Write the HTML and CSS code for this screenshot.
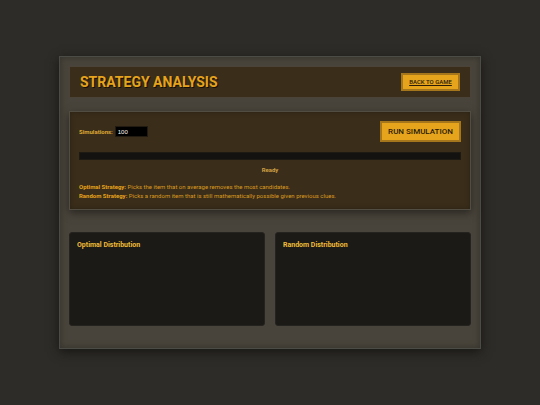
FILE: index.html
```html
<!DOCTYPE html>
<html lang="en">
<head>
<meta charset="utf-8">
<meta name="viewport" content="width=device-width, initial-scale=1">
<title>Strategy Analysis</title>
<link rel="stylesheet" href="styles.css">
</head>
<body>
<main class="frame">
  <header class="header">
    <h1 class="title">STRATEGY ANALYSIS</h1>
    <a class="btn btn-back" href="#">BACK TO GAME</a>
  </header>
  <section class="panel">
    <div class="controls">
      <div class="field">
        <label for="sims">Simulations:</label>
        <input id="sims" type="text" inputmode="numeric" value="100">
      </div>
      <button class="btn btn-run" type="button">RUN SIMULATION</button>
    </div>
    <div class="progress"></div>
    <p class="status">Ready</p>
    <div class="notes">
      <p><strong>Optimal Strategy:</strong> Picks the item that on average removes the most candidates.</p>
      <p><strong>Random Strategy:</strong> Picks a random item that is still mathematically possible given previous clues.</p>
    </div>
  </section>
  <section class="charts">
    <article class="card"><h2>Optimal Distribution</h2></article>
    <article class="card"><h2>Random Distribution</h2></article>
  </section>
</main>
</body>
</html>
```
FILE: styles.css
```css
* { box-sizing: border-box; }

body {
  margin: 0;
  min-height: 100vh;
  display: flex;
  align-items: center;
  justify-content: center;
  background: #2e2c28;
  color: #e6a41c;
  font-family: Roboto, "Liberation Sans", sans-serif;
}

h1, h2, p { margin: 0; }

.frame {
  width: 100%;
  max-width: 422px;
  padding: 9px 9px 22px;
  background: #49443b;
  border: 1px solid #4c4c46;
  box-shadow: inset 0 0 6px #30302a, 0 3px 10px #171614;
}

.header {
  display: flex;
  align-items: center;
  justify-content: space-between;
  height: 32px;
  padding: 0 10px;
  margin-bottom: 13px;
  background: #3a2d1a;
  border: 1px solid #4b4337;
}

.title {
  font-size: 14px;
  line-height: 18px;
  font-weight: 700;
  text-shadow: 1px 1px 0 #171008;
}

.btn {
  border: 2px solid #a5761b;
  background: #e6a41c;
  color: #2a1c08;
  font-family: inherit;
  font-weight: 500;
  text-align: center;
  white-space: nowrap;
}

.btn-back {
  min-width: 59px;
  padding: 2px 6px;
  font-size: 6px;
  line-height: 10px;
}

.btn-run {
  min-width: 81px;
  padding: 2px 6px;
  font-size: 8px;
  line-height: 13px;
}

.panel {
  padding: 9px;
  margin-bottom: 22px;
  background: #3a2d1a;
  border: 1px solid #514d43;
  box-shadow: inset 0 0 5px #2b2113, 0 3px 8px #292722;
}

.controls {
  display: flex;
  align-items: center;
  justify-content: space-between;
  margin-bottom: 10px;
}

.field {
  display: flex;
  align-items: center;
  gap: 2px;
  font-size: 6px;
  font-weight: 700;
  color: #dfaa35;
}

.field input {
  width: 33px;
  height: 11px;
  padding: 0 2px;
  border: 1px solid #211b12;
  border-radius: 0;
  background: #000;
  color: #fff;
  font: 6px "Liberation Sans", sans-serif;
}

.progress {
  height: 8px;
  background: #131211;
  border: 1px solid #1d1a14;
}

.status {
  margin: 5px 0 8px;
  font-size: 6px;
  line-height: 9px;
  font-weight: 700;
  text-align: center;
  color: #cfa044;
}

.notes {
  font-size: 6px;
  line-height: 9px;
  color: #d99a20;
}

.notes strong { color: #e6a41c; }

.charts {
  display: grid;
  grid-template-columns: 1fr 1fr;
  gap: 10px;
}

.card {
  min-height: 94px;
  padding: 8px 7px;
  background: #1c1a17;
  border: 1px solid #25231f;
  border-radius: 3px;
}

.card h2 {
  font-size: 7px;
  line-height: 9px;
  color: #f0bd38;
}
```
